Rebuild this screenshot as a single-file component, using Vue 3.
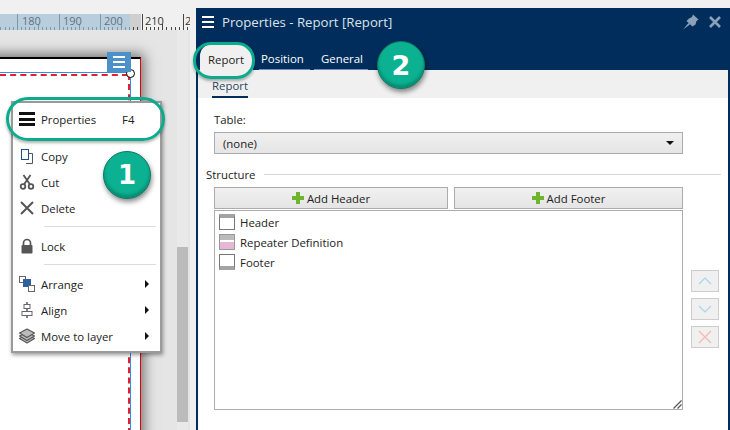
<script setup>
const ticks = [];
for (let i = 0; i < 46; i++) {
  const x = 17 + i * 4.15 - 16.6;
  const major = (i - 4) % 10 === 0;
  const mid = (i - 4) % 5 === 0;
  ticks.push({ x: Math.round(x) + 0.5, y: major ? 14 : mid ? 24 : 27 });
}
const labels = [
  { t: '180', x: 22, c: '#5d7384' },
  { t: '190', x: 63, c: '#5d7384' },
  { t: '200', x: 104, c: '#5d7384' },
  { t: '210', x: 145, c: '#333' },
  { t: '2', x: 185, c: '#333' },
];
</script>

<template>
  <div class="app">
    <section class="workspace">
      <svg class="ruler" width="190" height="16" viewBox="0 14 190 16">
        <rect x="0" y="14" width="130" height="16" fill="#b9cedd" />
        <rect x="130" y="14" width="11" height="16" fill="#cfcfcf" />
        <rect x="141" y="14" width="49" height="16" fill="#f0f0f0" />
        <line v-for="t in ticks" :key="t.x" :x1="t.x" :x2="t.x" :y1="t.y" y2="30" :stroke="t.x < 130 ? '#7f97a8' : '#444'" stroke-width="1" />
        <text v-for="l in labels" :key="l.t" :x="l.x" y="25" :fill="l.c" class="ruler-text">{{ l.t }}</text>
      </svg>
      <div class="canvas">
        <svg class="ruler-arrow" width="10" height="6" viewBox="0 0 10 6"><path d="M5 0 L10 6 H0 Z" fill="#8d8d8d" /></svg>
        <div class="page"></div>
        <div class="sel-blue-h"></div>
        <div class="sel-red-h"></div>
        <div class="sel-blue-v"></div>
        <div class="sel-red-v"></div>
        <div class="handle"></div>
        <div class="menu-button"><span></span><span></span><span></span></div>
        <div class="track"><div class="thumb"></div></div>

        <div class="menu">
          <div class="item item-top">
            <span class="ico burger"><i></i><i></i><i></i></span>
            <span class="label">Properties</span>
            <span class="key">F4</span>
          </div>
          <div class="group group-first">
            <div class="item">
              <svg class="ico" width="16" height="16" viewBox="0 0 16 16"><path d="M5.5 5.5 H13.5 V15.5 H7" fill="none" stroke="#555" /><rect x="2.5" y="1.5" width="7" height="10" fill="#fff" stroke="#1d4f87" /></svg>
              <span class="label">Copy</span>
            </div>
            <div class="item">
              <svg class="ico" width="16" height="16" viewBox="0 0 16 16"><g fill="none" stroke="#555" stroke-width="1.8"><circle cx="4" cy="12.5" r="2.3" /><circle cx="12" cy="12.5" r="2.3" /><path d="M5 10.5 L11.5 1 M11 10.5 L4.5 1" /></g></svg>
              <span class="label">Cut</span>
            </div>
            <div class="item">
              <svg class="ico" width="16" height="16" viewBox="0 0 16 16"><path d="M2 2 L14 14 M14 2 L2 14" stroke="#555" stroke-width="2" /></svg>
              <span class="label">Delete</span>
            </div>
          </div>
          <div class="sep sep-one"></div>
          <div class="item">
            <svg class="ico" width="16" height="16" viewBox="0 0 16 16"><path d="M4.5 7 V5 a3.5 3.5 0 0 1 7 0 V7" fill="none" stroke="#555" stroke-width="1.7" /><rect x="2.5" y="7" width="11" height="8.5" rx="1" fill="#555" /></svg>
            <span class="label">Lock</span>
          </div>
          <div class="sep sep-two"></div>
          <div class="group">
            <div class="item">
              <svg class="ico" width="16" height="16" viewBox="0 0 16 16"><rect x="0.5" y="0.5" width="6" height="6" fill="#fff" stroke="#666" /><rect x="4" y="3" width="8" height="8" fill="#2f5ea6" /><rect x="9.5" y="9.5" width="6" height="6" fill="#fff" stroke="#666" /></svg>
              <span class="label">Arrange</span>
              <span class="caret"></span>
            </div>
            <div class="item">
              <svg class="ico" width="16" height="16" viewBox="0 0 16 16"><path d="M8 0 V16" stroke="#6d3a7c" stroke-width="1.4" /><rect x="5" y="2.5" width="6" height="4" fill="#fff" stroke="#666" /><rect x="3" y="9.5" width="10" height="4" fill="#fff" stroke="#666" /></svg>
              <span class="label">Align</span>
              <span class="caret"></span>
            </div>
            <div class="item">
              <svg class="ico" width="16" height="16" viewBox="0 0 16 16"><g fill="#bbb" stroke="#555" stroke-width="1.1" stroke-linejoin="round"><path d="M8 6.5 L15.5 10.5 L8 15 L0.5 10.5 Z" /><path d="M8 4 L15.5 8 L8 12.5 L0.5 8 Z" /><path d="M8 1 L15.5 5 L8 9.5 L0.5 5 Z" /></g></svg>
              <span class="label">Move to layer</span>
              <span class="caret"></span>
            </div>
          </div>
        </div>
        <div class="ring ring-menu"></div>
        <div class="badge badge-one">1</div>
      </div>
    </section>

    <section class="panel">
      <header class="titlebar">
        <span class="title-burger"><i></i><i></i><i></i></span>
        <span class="title">Properties - Report [Report]</span>
        <svg class="pin" width="16" height="16" viewBox="0 0 16 16"><path d="M10 0.5 L15.5 5.5 L13.5 7 L12.5 10.5 L9.5 12.5 L3.5 7 L6 4.5 L9 3 Z M5.5 9 L7 10.5 L0 15.5 Z" fill="#8ba1b8" /></svg>
        <svg class="close" width="12" height="12" viewBox="0 0 12 12"><path d="M1 1 L11 11 M11 1 L1 11" stroke="#8ba1b8" stroke-width="2.6" /></svg>
      </header>
      <nav class="tabs">
        <span class="tab tab-active">Report</span>
        <span class="tab tab-pos">Position</span>
        <span class="tab tab-gen">General</span>
      </nav>
      <div class="subtabs"><span class="subtab">Report</span></div>
      <div class="content">
        <div class="field-label">Table:</div>
        <div class="combo"><span>(none)</span><i class="combo-arrow"></i></div>
        <div class="legend"><span>Structure</span><i></i></div>
        <div class="add-row">
          <button class="btn btn-header"><svg width="12" height="12" viewBox="0 0 12 12"><path d="M4 0 H8 V4 H12 V8 H8 V12 H4 V8 H0 V4 H4 Z" fill="#6db52d" /></svg>Add Header</button>
          <button class="btn btn-footer"><svg width="12" height="12" viewBox="0 0 12 12"><path d="M4 0 H8 V4 H12 V8 H8 V12 H4 V8 H0 V4 H4 Z" fill="#6db52d" /></svg>Add Footer</button>
        </div>
        <div class="structure">
          <div class="list">
            <div class="row"><span class="band band-header"></span>Header</div>
            <div class="row"><span class="band band-repeat"></span>Repeater Definition</div>
            <div class="row"><span class="band band-footer"></span>Footer</div>
            <svg class="grip" width="9" height="9" viewBox="0 0 9 9"><path d="M0.5 8.5 L8.5 0.5 M4.5 8.5 L8.5 4.5" stroke="#555" stroke-width="1.2" /></svg>
          </div>
          <div class="side">
            <button class="side-btn"><svg width="14" height="8" viewBox="0 0 14 8"><path d="M1 7 L7 1 L13 7" fill="none" stroke="#a6d5ee" stroke-width="1.2" /></svg></button>
            <button class="side-btn"><svg width="14" height="8" viewBox="0 0 14 8"><path d="M1 1 L7 7 L13 1" fill="none" stroke="#a6d5ee" stroke-width="1.2" /></svg></button>
            <button class="side-btn"><svg width="14" height="14" viewBox="0 0 14 14"><path d="M1 1 L13 13 M13 1 L1 13" stroke="#f5b9b5" stroke-width="1.4" /></svg></button>
          </div>
        </div>
      </div>
      <div class="ring ring-tab"></div>
      <div class="badge badge-two">2</div>
    </section>
  </div>
</template>

<style scoped>
.app {
  width: 730px;
  height: 430px;
  display: flex;
  overflow: hidden;
  background: #f0f0f0;
  font-family: "Open Sans", "Noto Sans", sans-serif;
  font-size: 11.4px;
  color: #222;
  position: relative;
}
.workspace {
  width: 190px;
  padding-top: 14px;
  display: flex;
  flex-direction: column;
  flex: none;
  box-sizing: border-box;
  margin-right: 6px;
}
.ruler { display: block; flex: none; }
.ruler-text { font-family: "Open Sans", sans-serif; font-size: 11px; }
.canvas {
  position: relative;
  flex: 1;
  background: #e5e5e5;
  overflow: hidden;
}
.ruler-arrow { position: absolute; left: 177px; top: 5px; }
.page {
  position: absolute;
  left: -20px;
  top: 27px;
  width: 161px;
  height: 420px;
  background: #fff;
  border-top: 2px solid #000;
  border-right: 1px solid #e40000;
  box-sizing: border-box;
  box-shadow: 0 0 12px 3px rgba(0, 0, 0, 0.5);
}
.sel-blue-h { position: absolute; left: 0; top: 42px; width: 130px; height: 1px; background: #2f8fe8; }
.sel-red-h { position: absolute; left: 0; top: 44px; width: 128px; height: 0; border-top: 2px dashed #e6202a; }
.sel-blue-v { position: absolute; left: 130px; width: 1px; background: #2f8fe8; top: 42px; height: 360px; }
.sel-red-v { position: absolute; left: 128px; top: 44px; height: 360px; border-left: 2px dashed #e6202a; }
.handle {
  position: absolute;
  left: 126px;
  top: 39px;
  width: 9px;
  height: 9px;
  box-sizing: border-box;
  border: 1px solid #000;
  border-radius: 50%;
  background: #fff;
}
.menu-button {
  position: absolute;
  left: 107px;
  top: 22px;
  width: 24px;
  height: 20px;
  background: #4c92c9;
  box-sizing: border-box;
  padding: 4px 6px;
  display: flex;
  flex-direction: column;
  gap: 3px;
}
.menu-button span { display: block; height: 2px; background: #fff; }
.track {
  position: absolute;
  left: 177px;
  top: 0;
  bottom: 0;
  width: 11px;
  background: #e9e9e9;
}
.thumb { margin-top: 217px; height: 175px; background: #bbb; }
.menu {
  position: absolute;
  left: 11px;
  top: 71px;
  width: 151px;
  height: 252px;
  box-sizing: border-box;
  background: #fff;
  border: 2px solid #9a9a9a;
  box-shadow: 1px 2px 4px rgba(0, 0, 0, 0.4);
  display: flex;
  flex-direction: column;
}
.item {
  height: 26px;
  flex: none;
  display: flex;
  align-items: center;
  padding-left: 6px;
  position: relative;
}
.item-top { margin-top: 1px; height: 30px; }
.group { display: flex; flex-direction: column; }
.group-first { margin-top: 9px; }
.ico { width: 16px; height: 16px; flex: none; margin-right: 6px; }
.burger { display: flex; flex-direction: column; justify-content: space-between; padding: 1px 0; box-sizing: border-box; }
.burger i { display: block; height: 3px; background: #111; }
.label { flex: none; }
.key { position: absolute; left: 109px; }
.caret {
  position: absolute;
  left: 132px;
  width: 0;
  height: 0;
  border-left: 4px solid #111;
  border-top: 4px solid transparent;
  border-bottom: 4px solid transparent;
}
.sep { height: 1px; background: #dcdcdc; margin: 0 4px 0 31px; flex: none; }
.sep-one { margin-top: 5px; margin-bottom: 6px; }
.sep-two { margin-top: 5px; margin-bottom: 6px; }
.ring {
  position: absolute;
  border: 3px solid #0cab8d;
  box-sizing: border-box;
  box-shadow: 0 2px 3px rgba(0, 0, 0, 0.3);
}
.ring-menu { left: 6px; top: 67px; width: 159px; height: 44px; border-radius: 22px; }
.ring-tab { left: -5px; top: 34px; width: 62px; height: 37px; border-radius: 18px; }
.badge {
  position: absolute;
  width: 48px;
  height: 48px;
  box-sizing: border-box;
  border-radius: 50%;
  display: flex;
  align-items: center;
  justify-content: center;
  color: #fff;
  font-family: "DejaVu Sans", sans-serif;
  font-weight: 700;
  background: #0bb190;
  border: 1px solid #0b7a66;
  box-shadow: inset 0 -3px 3px rgba(0, 70, 60, 0.35), 1px 3px 5px rgba(0, 0, 0, 0.45);
}
.badge-one { left: 103px; top: 121px; font-size: 26px; }
.badge-two { left: 179px; top: 33px; font-size: 27px; }
.panel {
  flex: 1;
  margin-top: 8px;
  display: flex;
  flex-direction: column;
  position: relative;
  border-left: 2px solid #002d5b;
  border-right: 2px solid #002d5b;
  background: #fff;
}
.titlebar {
  height: 28px;
  padding-bottom: 2px;
  flex: none;
  background: #002d5b;
  display: flex;
  align-items: center;
  padding-left: 4px;
  color: #dbe3ec;
  position: relative;
}
.title-burger { width: 12px; display: flex; flex-direction: column; gap: 3px; margin-right: 8px; }
.title-burger i { display: block; height: 2px; background: #fff; }
.title { font-size: 13.2px; }
.pin { position: absolute; left: 485px; top: 6px; }
.close { position: absolute; left: 511px; top: 8px; }
.tabs {
  height: 32px;
  flex: none;
  background: #002d5b;
  display: flex;
  align-items: flex-end;
  color: #fff;
}
.tab { height: 26px; padding-top: 4px; display: flex; align-items: center; box-sizing: border-box; flex: none; }
.tab-active { background: #f0f0f0; color: #222; margin-left: 2px; width: 53px; padding-left: 8px; border-radius: 12px 12px 0 0; }
.tab-pos { margin-left: 6px; width: 51px; padding-left: 2px; border-bottom: 1px solid #6d93b5; }
.tab-gen { margin-left: 4px; width: 54px; padding-left: 7px; border-bottom: 1px solid #6d93b5; }
.subtabs { height: 28px; flex: none; background: #f0f0f0; display: flex; align-items: stretch; padding-left: 14px; }
.subtab { display: flex; align-items: flex-end; padding-bottom: 3px; height: 28px; box-sizing: border-box; border-bottom: 2px solid #002d5b; color: #29465f; }
.content { flex: 1; padding: 14px 7px 0 8px; position: relative; }
.field-label { margin-left: 8px; height: 20px; line-height: 16px; }
.combo {
  height: 22px;
  margin-left: 8px;
  width: 469px;
  box-sizing: border-box;
  border: 1px solid #acacac;
  background: linear-gradient(#f0f0f0, #e5e5e5);
  display: flex;
  align-items: center;
  justify-content: space-between;
  padding: 0 8px;
}
.combo-arrow { width: 0; height: 0; border-top: 4px solid #111; border-left: 4px solid transparent; border-right: 4px solid transparent; }
.legend { display: flex; align-items: center; gap: 8px; height: 16px; margin-top: 12px; }
.legend i { flex: 1; height: 1px; background: #d6d6d6; }
.add-row { display: flex; gap: 6px; margin: 5px 0 1px 8px; width: 469px; }
.btn {
  height: 22px;
  box-sizing: border-box;
  border: 1px solid #acacac;
  background: linear-gradient(#f0f0f0, #e5e5e5);
  font: inherit;
  color: #222;
  display: flex;
  align-items: center;
  justify-content: center;
  gap: 3px;
  padding: 0;
}
.btn-header { width: 234px; }
.btn-footer { width: 229px; }
.structure { display: flex; margin-left: 8px; }
.list {
  width: 469px;
  height: 200px;
  box-sizing: border-box;
  border: 1px solid #acacac;
  padding-top: 1px;
  position: relative;
  display: flex;
  flex-direction: column;
}
.row { height: 20px; flex: none; display: flex; align-items: center; padding-left: 4px; gap: 5px; }
.band { width: 16px; height: 16px; box-sizing: border-box; border: 1px solid #777; background: #fff; flex: none; }
.band-header { border-top: 4px solid #a3a3a3; }
.band-repeat { background: linear-gradient(#bbb 0 5px, #fff 5px 7px, #e6b8d6 7px); border-color: #999; }
.band-footer { border-bottom: 4px solid #a3a3a3; }
.grip { position: absolute; right: 0; bottom: 0; }
.side { display: flex; flex-direction: column; gap: 6px; margin: 60px 0 0 8px; }
.side-btn {
  width: 28px;
  height: 22px;
  border: 1px solid #cdcdcd;
  background: #f0f0f0;
  display: flex;
  align-items: center;
  justify-content: center;
  padding: 0;
}
</style>

<style>
html, body { margin: 0; padding: 0; background: #f0f0f0; }
</style>
